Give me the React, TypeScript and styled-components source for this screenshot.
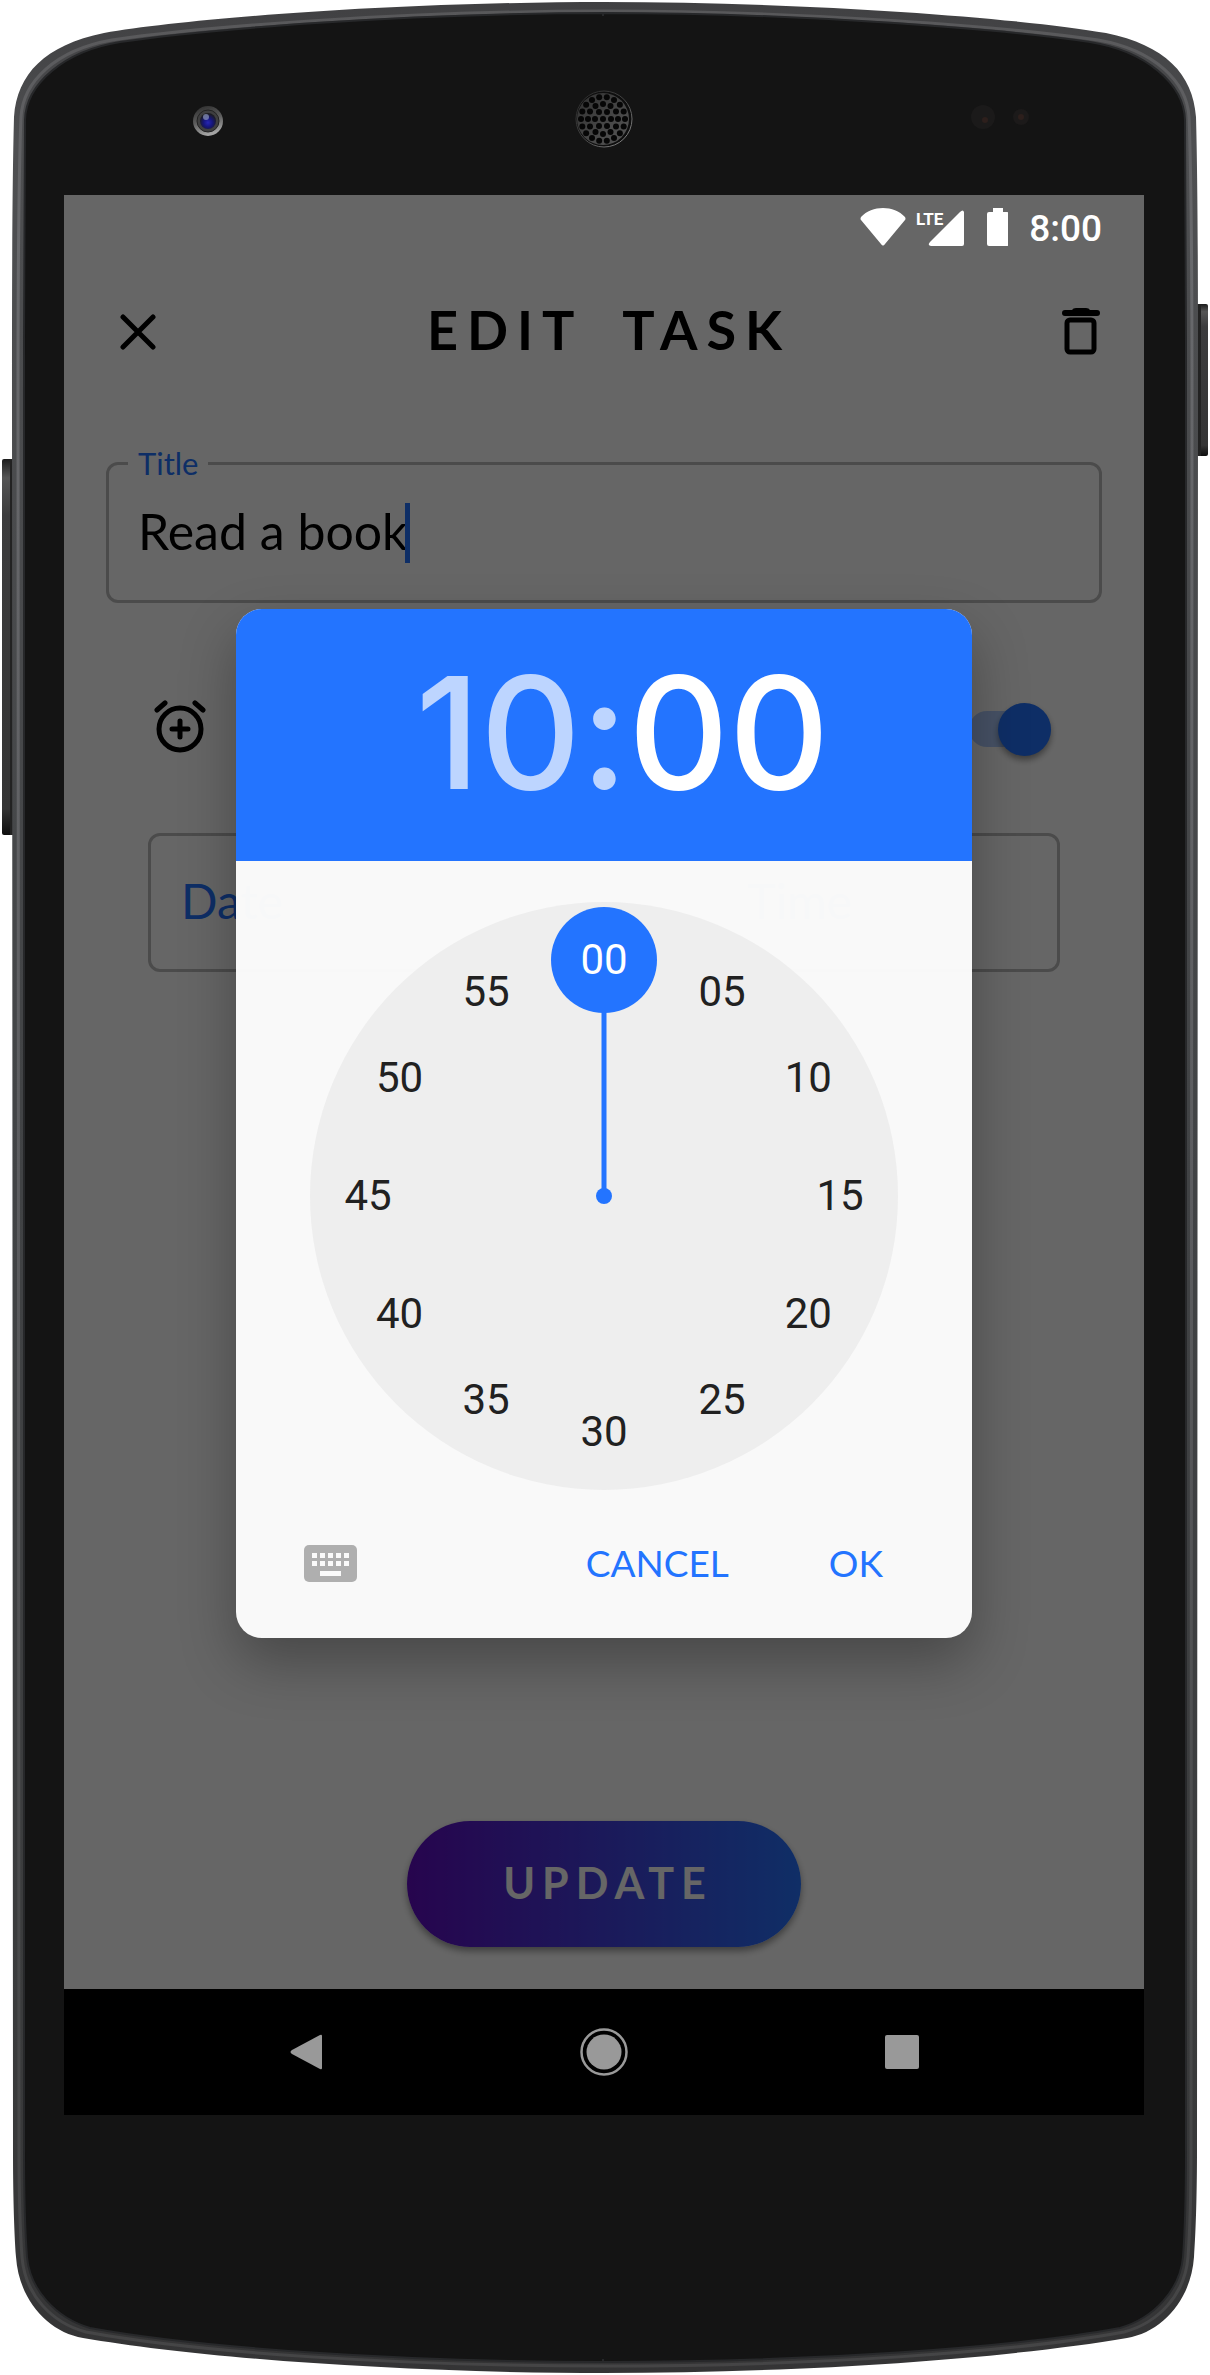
import React, { useState } from 'react';
import styled, { createGlobalStyle } from 'styled-components';

const BLUE = '#2374ff';
const SANS = "Lato, 'Open Sans', sans-serif";

const GlobalStyle = createGlobalStyle`
  *, *::before, *::after { box-sizing: border-box; }
  body { margin: 0; background: #fff; font-family: ${SANS}; }
  button, input { font: inherit; color: inherit; }
  button { padding: 0; border: 0; background: none; cursor: pointer; }
`;

/* ---------- device ---------- */

const Device = styled.div`
  position: relative;
  max-width: 1210px;
  margin: 0 auto;
  padding: 195px 66px 260px 64px;
`;

const Casing = styled.svg`
  position: absolute;
  inset: 0;
  width: 100%;
  height: 100%;
`;

const Screen = styled.div`
  position: relative;
  display: flex;
  flex-direction: column;
  aspect-ratio: 9 / 16;
  background: #fff;
`;

const AppArea = styled.div`
  position: relative;
  flex: 1;
  display: flex;
  flex-direction: column;
  color: #000;
`;

const StatusBar = styled.div`
  position: relative;
  z-index: 2;
  display: flex;
  justify-content: flex-end;
  align-items: center;
  height: 63px;
  padding-right: 42px;
  color: #fff;
`;

const StatusIcons = styled.svg`
  width: 152px;
  height: 42px;
  margin-right: 21px;
`;

const Clock = styled.time`
  font: 500 37px/42px Roboto, sans-serif;
  padding-top: 4px;
`;

/* ---------- task form ---------- */

const AppBar = styled.header`
  display: flex;
  align-items: center;
  justify-content: space-between;
  height: 147px;
  padding: 0 32px 0 42px;
`;

const IconButton = styled.button`
  display: grid;
  place-items: center;
  width: 63px;
  height: 84px;
`;

const Heading = styled.h1`
  margin: 0;
  padding-bottom: 4px;
  font-size: 54px;
  line-height: 64px;
  font-weight: 700;
  letter-spacing: 9px;
  word-spacing: 20px;
`;

const Form = styled.form`
  flex: 1;
  display: flex;
  flex-direction: column;
  padding: 42px;
`;

const Field = styled.fieldset`
  display: flex;
  align-items: center;
  min-width: 0;
  margin: 0;
  padding: 24px 30px 37px 19px;
  border: 3px solid #bbb;
  border-radius: 12px;
`;

const Legend = styled.legend`
  padding: 0 10px;
  color: ${BLUE};
  font-size: 31px;
  line-height: 32px;
`;

const TextInput = styled.input`
  field-sizing: content;
  margin-left: 10px;
  padding: 0 0 4px;
  border: 0;
  outline: 0;
  background: none;
  font-size: 50px;
  line-height: 56px;
  height: 60px;
`;

const Caret = styled.span`
  width: 5px;
  height: 60px;
  margin-left: -3px;
  background: ${BLUE};
`;

const ReminderRow = styled.div`
  display: flex;
  align-items: center;
  justify-content: space-between;
  height: 84px;
  margin: 84px 42px 0;
  padding-right: 9px;
`;

const Switch = styled.input`
  appearance: none;
  display: flex;
  align-items: center;
  justify-content: flex-end;
  width: 82px;
  height: 36px;
  margin: 0;
  border-radius: 18px;
  background: #b2ceff;
  &::before {
    content: '';
    flex: none;
    width: 53px;
    height: 53px;
    border-radius: 50%;
    background: ${BLUE};
    box-shadow: 0 4px 6px rgba(0, 0, 0, 0.4);
  }
`;

const DateTime = styled.div`
  display: grid;
  grid-template-columns: 5fr 3fr;
  height: 139px;
  margin: 62px 42px 0;
  border: 3px solid #bbb;
  border-radius: 12px;
`;

const DateTimeButton = styled.button`
  padding: 0 0 4px 30px;
  text-align: left;
  color: ${BLUE};
  font-size: 48px;
`;

const Update = styled.button`
  width: 394px;
  height: 126px;
  margin: auto auto 0;
  padding: 0 0 4px 8px;
  border-radius: 63px;
  background: linear-gradient(90deg, #610cc3, #2874ff);
  box-shadow: 0 4px 7px rgba(0, 0, 0, 0.4);
  color: #fff;
  font-size: 43px;
  font-weight: 700;
  letter-spacing: 7px;
`;

/* ---------- time picker ---------- */

const Scrim = styled.div`
  position: absolute;
  inset: 0;
  z-index: 1;
  display: grid;
  place-items: center;
  padding-top: 63px;
  background: rgba(0, 0, 0, 0.6);
`;

const Dialog = styled.section`
  display: flex;
  flex-direction: column;
  width: 736px;
  max-width: 100%;
  overflow: hidden;
  border-radius: 26px;
  background: rgba(252, 252, 252, 0.98);
  box-shadow: 0 24px 56px rgba(0, 0, 0, 0.3);
`;

const TimeHeader = styled.div`
  display: flex;
  align-items: center;
  justify-content: center;
  height: 252px;
  padding: 0 0 4px 37px;
  background: ${BLUE};
  color: rgba(255, 255, 255, 0.7);
  font: 500 156px/200px Inter, sans-serif;
`;

const TimePart = styled.button<{ $active?: boolean }>`
  color: ${(p) => (p.$active ? '#fff' : 'inherit')};
`;

const Dial = styled.div`
  position: relative;
  width: 588px;
  height: 588px;
  margin: 41px auto 0;
  border-radius: 50%;
  background: #eee;
`;

const Hand = styled.svg`
  position: absolute;
  inset: 0;
`;

const Minute = styled.button<{ $active: boolean }>`
  position: absolute;
  width: 106px;
  height: 106px;
  margin: -53px 0 0 -53px;
  border-radius: 50%;
  background: ${(p) => (p.$active ? BLUE : 'transparent')};
  color: ${(p) => (p.$active ? '#fff' : '#212121')};
  font: 400 42px/106px Roboto, sans-serif;
`;

const Actions = styled.div`
  display: flex;
  align-items: center;
  height: 148px;
  padding: 0 68px 2px;
`;

const KeyboardButton = styled(IconButton)`
  width: 53px;
  margin-right: auto;
`;

const Action = styled.button`
  height: 84px;
  padding: 0 21px 2px;
  margin-left: 58px;
  color: ${BLUE};
  font-size: 37px;
`;

const NavBar = styled.nav`
  display: grid;
  grid-template-columns: repeat(3, 1fr);
  align-items: center;
  height: 126px;
  padding: 0 93px;
  background: #000;
`;

const NavButton = styled.button`
  display: grid;
  place-items: center;
  height: 126px;
`;

const OUTER =
  'M607 2 C400 2 190 18 104 33 C45 45 17 74 14 117 C12 190 12 300 12 400 L13 2150 C13 2190 14 2230 16 2257 C19 2300 48 2332 83 2338 C200 2358 400 2373 607 2373 Z';
const RIM =
  'M607 11 C400 11 200 27 112 40 C55 50 23 82 21 117 C18 190 18 300 18 400 L19 2150 C19 2190 20 2230 22 2257 C25 2295 52 2323 86 2332 C200 2353 400 2366 607 2366';
const GLASS =
  'M607 13 C400 13 200 30 120 42 C64 51 26 84 25 120 C24 190 24 300 24 400 L24 2150 C24 2190 25 2230 27 2257 C30 2290 56 2318 90 2328 C200 2348 400 2362 607 2362 Z';

const HOLES = [
  { count: 1, radius: 0 },
  { count: 6, radius: 8 },
  { count: 12, radius: 15 },
  { count: 18, radius: 22 },
].flatMap(({ count, radius }) =>
  Array.from({ length: count }, (_, i) => {
    const a = (i / count) * Math.PI * 2;
    return { x: 603 + radius * Math.cos(a), y: 119 + radius * Math.sin(a) };
  }),
);

function HalfCase() {
  return (
    <>
      <path d={OUTER} fill="url(#metal)" />
      <path d={RIM} fill="none" stroke="url(#shine)" strokeWidth="3" />
      <path d={GLASS} fill="#141414" stroke="#27282a" strokeWidth="2" />
    </>
  );
}

function PhoneCase() {
  return (
    <Casing viewBox="0 0 1210 2375" preserveAspectRatio="none" aria-hidden="true">
      <defs>
        <linearGradient id="metal" x1="0" y1="0" x2="0" y2="1">
          <stop offset="0" stopColor="#404042" />
          <stop offset="0.06" stopColor="#4e4f51" />
          <stop offset="0.5" stopColor="#414345" />
          <stop offset="0.85" stopColor="#3a3b3c" />
          <stop offset="1" stopColor="#343435" />
        </linearGradient>
        <linearGradient id="shine" x1="0" y1="0" x2="0" y2="1">
          <stop offset="0" stopColor="#58585a" />
          <stop offset="0.1" stopColor="#68696c" />
          <stop offset="0.5" stopColor="#5c5d60" />
          <stop offset="0.85" stopColor="#474849" />
          <stop offset="1" stopColor="#454546" />
        </linearGradient>
        <linearGradient id="key" x1="0" y1="0" x2="0" y2="1">
          <stop offset="0" stopColor="#1c1c1c" />
          <stop offset="0.05" stopColor="#555" />
          <stop offset="0.15" stopColor="#3c3c3d" />
          <stop offset="0.93" stopColor="#343434" />
          <stop offset="1" stopColor="#0e0e0e" />
        </linearGradient>
        <linearGradient id="ring" x1="0" y1="0" x2="0.3" y2="1">
          <stop offset="0" stopColor="#2a2a2a" />
          <stop offset="0.55" stopColor="#5c5c5c" />
          <stop offset="1" stopColor="#a3a3a3" />
        </linearGradient>
        <radialGradient id="lens" cx="0.5" cy="0.6" r="0.55">
          <stop offset="0" stopColor="#2626b4" />
          <stop offset="0.5" stopColor="#16167c" />
          <stop offset="1" stopColor="#1c1c22" />
        </radialGradient>
        <linearGradient id="grille" x1="0" y1="0" x2="1" y2="1">
          <stop offset="0" stopColor="#303030" />
          <stop offset="1" stopColor="#575757" />
        </linearGradient>
        <linearGradient id="grilleEdge" x1="0" y1="0" x2="1" y2="1">
          <stop offset="0" stopColor="#262626" />
          <stop offset="0.5" stopColor="#444" />
          <stop offset="1" stopColor="#929292" />
        </linearGradient>
      </defs>
      <rect x="2" y="459" width="14" height="376" rx="2" fill="url(#key)" />
      <rect x="10" y="459" width="3" height="376" fill="#222" />
      <rect x="1194" y="304" width="14" height="152" rx="2" fill="url(#key)" />
      <rect x="1198" y="304" width="3" height="152" fill="#222" />
      <HalfCase />
      <g transform="translate(1210 0) scale(-1 1)">
        <HalfCase />
      </g>
      <path d="M600 16H610V2359H600Z" fill="#141414" />

      <circle cx="208" cy="121" r="15" fill="url(#ring)" />
      <circle cx="208" cy="121" r="11" fill="#3f3f40" stroke="#232323" strokeWidth="1" />
      <circle cx="208" cy="121" r="8" fill="url(#lens)" />
      <circle cx="206" cy="117" r="3" fill="#8d99bd" opacity="0.7" />

      <circle cx="604" cy="119" r="28" fill="#0e0e0e" stroke="url(#grilleEdge)" strokeWidth="1" />
      <circle cx="603" cy="119" r="26" fill="url(#grille)" />
      {HOLES.map((h, i) => (
        <circle key={i} cx={h.x} cy={h.y} r="3" fill="#060606" />
      ))}

      <circle cx="983" cy="117" r="12" fill="#1b1a1a" />
      <circle cx="985" cy="120" r="3" fill="#2d1f1c" />
      <circle cx="1021" cy="117" r="8" fill="#1c1a1a" />
      <circle cx="1021" cy="117" r="3" fill="#2d1f1c" />
    </Casing>
  );
}

function StatusGlyphs() {
  return (
    <StatusIcons viewBox="0 0 152 42" aria-label="Wi-Fi, LTE signal, battery full">
      <g fill="#fff">
        <path d="M5 11 C16 -1 38 -1 49 11 Q50 13 49 14 L29 38 Q27 41 25 38 L5 14 Q4 13 5 11Z" />
        <path d="M104 6 Q107 3 108 6 V38 Q108 40 106 40 H75 Q71 39 74 36Z" />
        <path d="M137 2 H147 V6 H151 Q153 6 153 8 V38 Q153 40 151 40 H133 Q131 40 131 38 V8 Q131 6 133 6 H137Z" />
        <text x="60" y="19" fontFamily="'Liberation Sans Narrow', Roboto, sans-serif" fontSize="17" fontWeight="700">
          LTE
        </text>
      </g>
    </StatusIcons>
  );
}

const MINUTES = Array.from({ length: 12 }, (_, i) => i * 5);
const pad = (n: number) => String(n).padStart(2, '0');
const ORBIT = 236;

function spot(minute: number) {
  const a = (minute / 60) * Math.PI * 2;
  return { x: 294 + ORBIT * Math.sin(a), y: 294 - ORBIT * Math.cos(a) };
}

function TimePicker() {
  const [minute, setMinute] = useState(0);
  const tip = spot(minute);
  return (
    <Dialog role="dialog" aria-label="Select time">
      <TimeHeader>
        <TimePart type="button">10</TimePart>
        <span>:</span>
        <TimePart type="button" $active>
          {pad(minute)}
        </TimePart>
      </TimeHeader>
      <Dial>
        <Hand width="588" height="588" viewBox="0 0 588 588" aria-hidden="true">
          <line x1="294" y1="294" x2={tip.x} y2={tip.y} stroke={BLUE} strokeWidth="5" />
          <circle cx="294" cy="294" r="8" fill={BLUE} />
        </Hand>
        {MINUTES.map((m) => {
          const p = spot(m);
          return (
            <Minute
              key={m}
              type="button"
              $active={m === minute}
              onClick={() => setMinute(m)}
              style={{ left: p.x, top: p.y }}
            >
              {pad(m)}
            </Minute>
          );
        })}
      </Dial>
      <Actions>
        <KeyboardButton type="button" aria-label="Enter time with keyboard">
          <svg width="53" height="37" viewBox="0 0 53 37">
            <rect width="53" height="37" rx="5" fill="#afafaf" />
            <g fill="#fafafa">
              {[8, 16, 24, 32, 40].map((x) => (
                <React.Fragment key={x}>
                  <rect x={x} y="8" width="5" height="5" />
                  <rect x={x} y="16" width="5" height="5" />
                </React.Fragment>
              ))}
              <rect x="16" y="26" width="21" height="5" />
            </g>
          </svg>
        </KeyboardButton>
        <Action type="button">CANCEL</Action>
        <Action type="button">OK</Action>
      </Actions>
    </Dialog>
  );
}

export default function App() {
  const [title, setTitle] = useState('Read a book');
  return (
    <>
      <GlobalStyle />
      <Device>
        <PhoneCase />
        <Screen>
          <AppArea>
            <StatusBar>
              <StatusGlyphs />
              <Clock>8:00</Clock>
            </StatusBar>
            <AppBar>
              <IconButton type="button" aria-label="Close">
                <svg width="36" height="36" viewBox="0 0 36 36" stroke="#000" strokeWidth="5" strokeLinecap="round">
                  <path d="M3 3L33 33M33 3L3 33" />
                </svg>
              </IconButton>
              <Heading>EDIT TASK</Heading>
              <IconButton type="button" aria-label="Delete task">
                <svg width="38" height="48" viewBox="0 0 38 48">
                  <path d="M3 2H10Q11 0 14 0H24Q27 0 28 2H35Q38 2 38 5T35 8H3Q0 8 0 5T3 2Z" />
                  <rect x="5" y="12" width="27" height="32" rx="3" fill="none" stroke="#000" strokeWidth="5" />
                </svg>
              </IconButton>
            </AppBar>
            <Form onSubmit={(e) => e.preventDefault()}>
              <Field>
                <Legend>
                  <label htmlFor="task-title">Title</label>
                </Legend>
                <TextInput id="task-title" value={title} onChange={(e) => setTitle(e.target.value)} />
                <Caret />
              </Field>
              <ReminderRow>
                <IconButton as="label" htmlFor="reminder" aria-label="Reminder">
                  <svg width="52" height="60" viewBox="0 0 52 60" fill="none" stroke="#000" strokeWidth="5" strokeLinecap="round">
                    <circle cx="26" cy="30" r="21" />
                    <path d="M26 22V38M18 30H34M3 11L11 4M41 4L49 11" />
                  </svg>
                </IconButton>
                <Switch id="reminder" type="checkbox" role="switch" defaultChecked />
              </ReminderRow>
              <DateTime>
                <DateTimeButton type="button">Date</DateTimeButton>
                <DateTimeButton type="button">Time</DateTimeButton>
              </DateTime>
              <Update type="submit">UPDATE</Update>
            </Form>
            <Scrim>
              <TimePicker />
            </Scrim>
          </AppArea>
          <NavBar>
            <NavButton type="button" aria-label="Back">
              <svg width="32" height="36" viewBox="0 0 32 36">
                <path d="M30 1Q32 0 32 2V34Q32 36 30 35L2 20Q-1 18 2 16Z" fill="#999" />
              </svg>
            </NavButton>
            <NavButton type="button" aria-label="Home">
              <svg width="48" height="48" viewBox="0 0 48 48">
                <circle cx="24" cy="24" r="22.5" fill="none" stroke="#999" strokeWidth="2.5" />
                <circle cx="24" cy="24" r="17.5" fill="#999" />
              </svg>
            </NavButton>
            <NavButton type="button" aria-label="Recent apps">
              <svg width="34" height="34" viewBox="0 0 34 34">
                <rect width="34" height="34" rx="2" fill="#999" />
              </svg>
            </NavButton>
          </NavBar>
        </Screen>
      </Device>
    </>
  );
}
